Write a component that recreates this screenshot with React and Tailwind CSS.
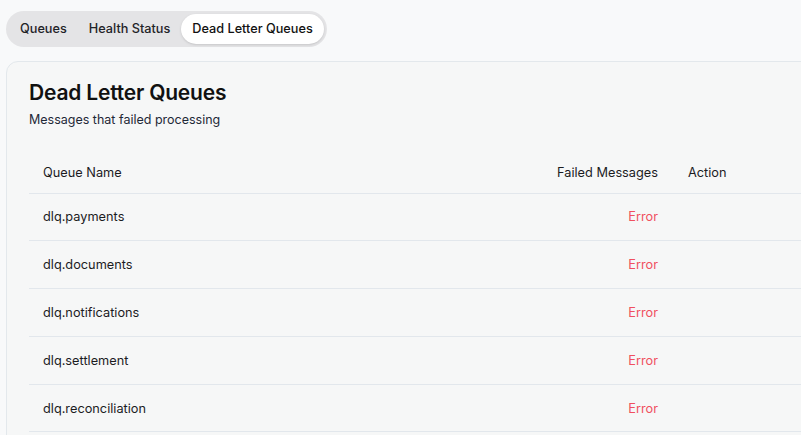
import React, { useState } from "react";

const tabs = ["Queues", "Health Status", "Dead Letter Queues"];

const dlqs = [
  "dlq.payments",
  "dlq.documents",
  "dlq.notifications",
  "dlq.settlement",
  "dlq.reconciliation",
];

const App = () => {
  const [active, setActive] = useState("Dead Letter Queues");

  return (
    <div
      className="w-[801px] h-[435px] overflow-hidden bg-[#f8f9fa] text-[#18181b]"
      style={{ fontFamily: "Inter, 'Noto Sans', sans-serif" }}
    >
      <div className="w-[1100px] pl-[6px] pt-[11px]">
        <div className="inline-flex items-center rounded-full bg-[#e4e4e6] p-[3px]">
          {tabs.map((tab) => (
            <button
              key={tab}
              onClick={() => setActive(tab)}
              className={`rounded-full px-[11px] h-[30px] text-[12.7px] font-medium leading-none ${
                active === tab ? "bg-white text-[#111] shadow-sm" : "text-[#1f2328]"
              }`}
            >
              {tab}
            </button>
          ))}
        </div>

        <div className="mt-[14px] rounded-xl border border-[#e3e8ec] bg-[#f6f7f7] px-[22px] pt-[17px] pb-[24px]">
          <h1 className="text-[21px] font-semibold leading-[28px] tracking-[-0.2px] text-[#111]">
            Dead Letter Queues
          </h1>
          <p className="mt-[4px] text-[12.5px] leading-[18px] text-[#1f2937]">
            Messages that failed processing
          </p>

          <table className="mt-[20px] w-[900px] border-collapse">
            <thead>
              <tr className="border-b border-[#e2e7ec] text-[12.75px] text-[#1c1c1f]">
                <th className="h-[44px] px-[14px] pt-[3px] text-left font-normal">Queue Name</th>
                <th className="w-[145px] px-[13px] pt-[3px] text-right font-normal">Failed Messages</th>
                <th className="w-[258px] px-[17px] pt-[3px] text-left font-normal">Action</th>
              </tr>
            </thead>
            <tbody className="text-[12.75px] text-[#1c1c1f]">
              {dlqs.map((name) => (
                <tr key={name} className="border-b border-[#e2e7ec]">
                  <td className="h-[47.8px] px-[14px]">{name}</td>
                  <td className="px-[13px] text-right text-[#f0505f]">Error</td>
                  <td className="px-[17px]"></td>
                </tr>
              ))}
            </tbody>
          </table>
        </div>
      </div>
    </div>
  );
};

export default App;
